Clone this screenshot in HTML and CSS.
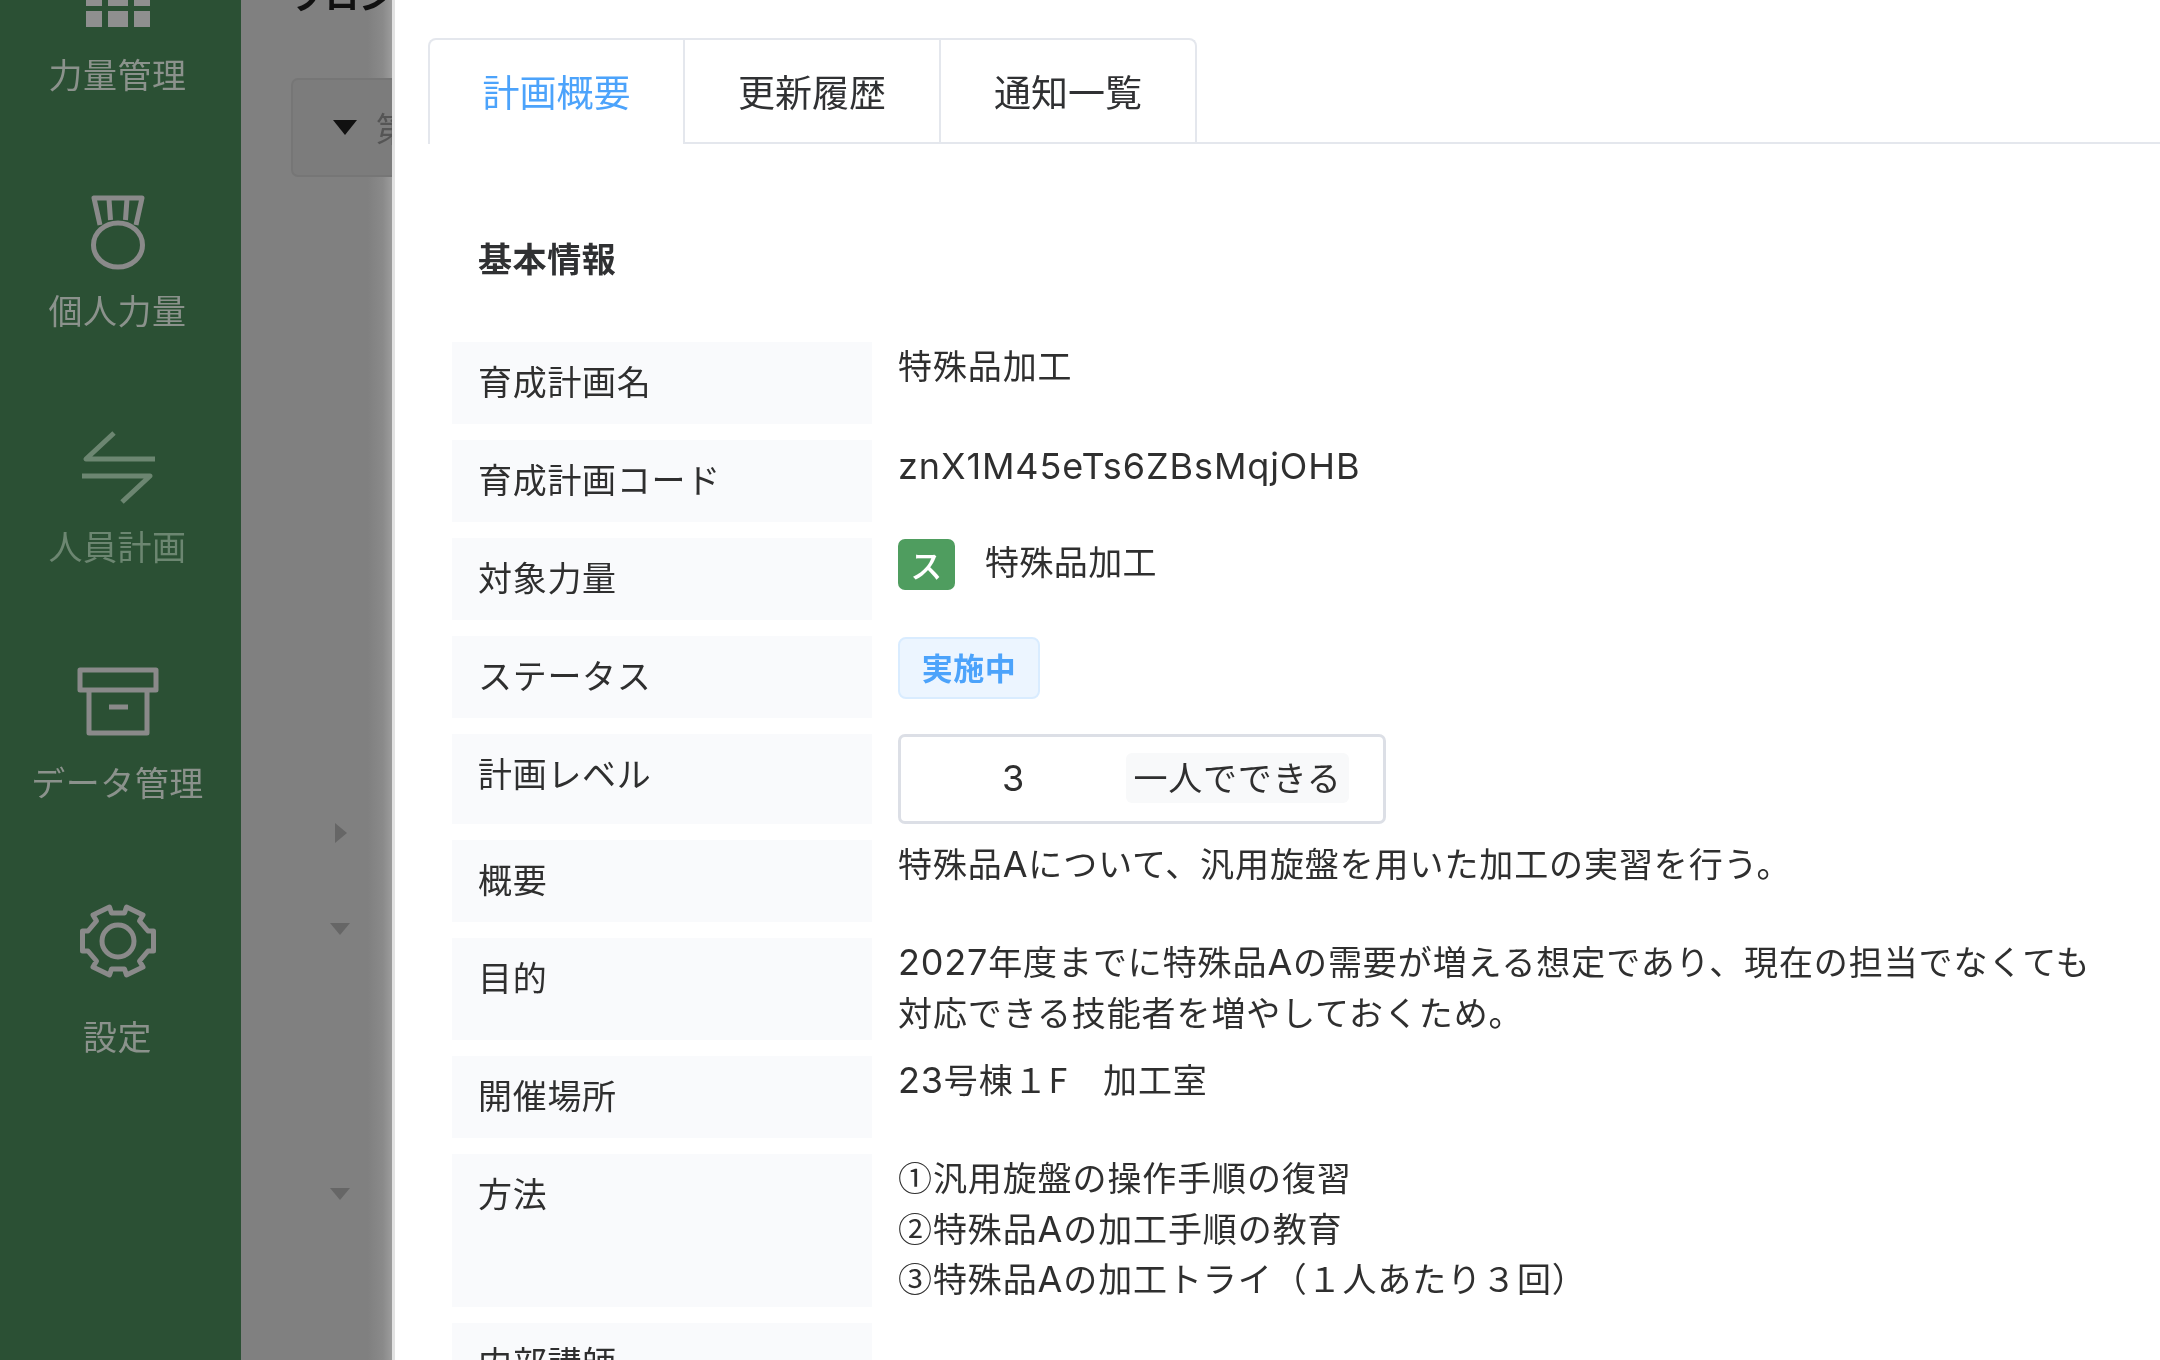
FILE: index.html
```html
<!DOCTYPE html>
<html lang="ja">
<head>
<meta charset="utf-8">
<title>計画概要</title>
<link rel="stylesheet" href="styles.css">
</head>
<body>
<div class="app">
  <nav class="sidebar">
    <div class="nav-item">
      <svg class="nav-icon" viewBox="0 0 100 80" aria-hidden="true"><path class="fill" d="M18 13h16v16H18zM40 13h20v16H40zM66 13h16v16H66zM18 34h16v16H18zM40 34h20v16H40zM66 34h16v16H66zM18 55h16v16H18zM40 55h20v16H40zM66 55h16v16H66z"/></svg>
      <span class="nav-label">力量管理</span>
    </div>
    <div class="nav-item">
      <svg class="nav-icon" viewBox="0 0 100 80" aria-hidden="true"><path class="line" d="M32 33 26 6H74L68 33M41 7l1.500 21M59 7l-1.500 21"/><ellipse class="line" cx="50" cy="53" rx="24.500" ry="22"/></svg>
      <span class="nav-label">個人力量</span>
    </div>
    <div class="nav-item nav-item-dim">
      <svg class="nav-icon" viewBox="0 0 100 80" aria-hidden="true"><path class="line" d="M46 5 18 31H87M14 48H82L54 74"/></svg>
      <span class="nav-label">人員計画</span>
    </div>
    <div class="nav-item">
      <svg class="nav-icon" viewBox="0 0 100 80" aria-hidden="true"><path class="line" d="M12 6H88V26H12ZM21 26V69H79V26M41 43H60"/></svg>
      <span class="nav-label">データ管理</span>
    </div>
    <div class="nav-item nav-item-gear">
      <svg class="nav-icon" viewBox="0 0 100 80" aria-hidden="true"><path class="line" d="M43.500 11 41.500 5 25 13 28.500 19 20 29H14.500V49H20L28.500 59 25 65 41.500 73 43.500 67H56.500L58.500 73 75 65 71.500 59 80 49H85.500V29H80L71.500 19 75 13 58.500 5 56.500 11Z"/><circle class="line" cx="50" cy="39" r="16"/></svg>
      <span class="nav-label">設定</span>
    </div>
  </nav>

  <div class="backdrop">
    <div class="page-title">プロジ</div>
    <div class="filter-box"><span class="caret"></span><span class="filter-text">第</span></div>
    <div class="tree">
      <span class="tree-arrow tree-arrow-right"></span>
      <span class="tree-arrow tree-arrow-down tree-second"></span>
      <span class="tree-arrow tree-arrow-down tree-third"></span>
    </div>
  </div>

  <main class="drawer">
    <div class="tabs">
      <div class="tab tab-active">計画概要</div>
      <div class="tab">更新履歴</div>
      <div class="tab">通知一覧</div>
    </div>
    <h2 class="section-title">基本情報</h2>
    <div class="rows">
      <div class="row"><div class="label">育成計画名</div><div class="value">特殊品加工</div></div>
      <div class="row"><div class="label">育成計画コード</div><div class="value code">znX1M45eTs6ZBsMqjOHB</div></div>
      <div class="row"><div class="label">対象力量</div><div class="value skill"><span class="skill-badge">ス</span><span>特殊品加工</span></div></div>
      <div class="row"><div class="label">ステータス</div><div class="value"><span class="status-tag">実施中</span></div></div>
      <div class="row row-level"><div class="label">計画レベル</div><div class="value"><div class="level-box"><span class="level-num">3</span><span class="level-text">一人でできる</span></div></div></div>
      <div class="row"><div class="label">概要</div><div class="value">特殊品<span class="lat">A</span>について、汎用旋盤を用いた加工の実習を行う。</div></div>
      <div class="row"><div class="label">目的</div><div class="value"><span class="lat">2027</span>年度までに特殊品<span class="lat">A</span>の需要が増える想定であり、現在の担当でなくても対応できる技能者を増やしておくため。</div></div>
      <div class="row"><div class="label">開催場所</div><div class="value"><span class="lat">23</span>号棟１F　加工室</div></div>
      <div class="row"><div class="label">方法</div><div class="value">①汎用旋盤の操作手順の復習<br>②特殊品<span class="lat">A</span>の加工手順の教育<br>③特殊品<span class="lat">A</span>の加工トライ（１人あたり３回）</div></div>
      <div class="row"><div class="label">内部講師</div><div class="value"></div></div>
    </div>
  </main>
</div>
</body>
</html>
```
FILE: styles.css
```css
* { box-sizing: border-box; }
html, body { margin: 0; height: 100%; overflow: hidden; background: #fff; }
body {
  font-family: "Noto Sans CJK JP", "Noto Sans", sans-serif;
  font-size: 34px;
  color: #2f2f2f;
}
.app { display: flex; height: 1360px; width: 2160px; overflow: hidden; filter: blur(0.7px); }

.sidebar {
  flex: 0 0 241px;
  background: #2b5034;
  padding-right: 6px;
  display: flex;
  flex-direction: column;
  gap: 94px;
  overflow: hidden;
}
.nav-item { display: flex; flex-direction: column; align-items: center; color: #8b928c; flex: none; }
.nav-item:first-child { margin-top: -44px; }
.nav-icon { width: 100px; height: 80px; margin-bottom: 16px; display: block; }
.nav-label { font-size: 34px; line-height: 44px; letter-spacing: 0.5px; white-space: nowrap; height: 46px; }
.nav-item-dim { color: #6c8671; }
.nav-item-gear { margin-top: 2px; }
.nav-item-gear .nav-icon { margin-bottom: 32px; }
.fill { fill: #8f8f8f; }
.line { fill: none; stroke: #8a8a8a; stroke-width: 5; stroke-linejoin: round; }
.nav-item-dim .line { stroke: #6c8671; }

.backdrop {
  flex: 0 0 151px;
  background: linear-gradient(90deg, #808080 0, #808080 84%, #8a8a8a 94%, #9c9c9c 100%);
  position: relative;
  overflow: hidden;
  padding: 0 0 0 50px;
}
.page-title {
  margin-top: -26px;
  height: 41px;
  font-size: 34px;
  line-height: 41px;
  font-weight: 700;
  color: #111;
  white-space: nowrap;
}
.filter-box {
  width: 200px;
  height: 99px;
  margin-top: 63px;
  border: 2px solid #767676;
  border-radius: 7px;
  display: flex;
  align-items: center;
  gap: 19px;
  padding-left: 40px;
  background: #7c7c7c;
}
.caret { width: 0; height: 0; border-left: 12px solid transparent; border-right: 12px solid transparent; border-top: 15px solid #111; }
.filter-text { color: #555; font-size: 34px; }
.tree { position: relative; }
.tree-arrow { position: absolute; width: 0; height: 0; }
.tree-arrow-right { left: 44px; top: 646px; border-top: 10px solid transparent; border-bottom: 10px solid transparent; border-left: 12px solid #666; }
.tree-arrow-down { left: 39px; border-left: 10px solid transparent; border-right: 10px solid transparent; border-top: 12px solid #666; }
.tree-second { top: 746px; }
.tree-third { top: 1011px; }

.drawer {
  flex: 1;
  min-width: 0;
  background: #fff;
  border-left: 3px solid #e2e2e2;
  padding: 38px 0 0 33px;
}
.tabs {
  display: flex;
  border-bottom: 2px solid #e4e7ed;
  height: 106px;
}
.tab {
  width: 256px;
  height: 104px;
  border: 2px solid #e4e7ed;
  border-left-width: 0;
  border-bottom: 0;
  font-size: 37px;
  line-height: 102px;
  text-align: center;
  color: #303133;
}
.tab:first-child { width: 257px; border-left-width: 2px; border-top-left-radius: 8px; }
.tab:last-child { border-top-right-radius: 8px; }
.tab-active { color: #4ca3fb; height: 106px; background: #fff; }

.section-title { margin: 89px 0 0 50px; font-size: 34px; line-height: 50px; font-weight: 700; letter-spacing: 0.6px; color: #303133; }
.rows { margin: 59px 50px 0 24px; display: flex; flex-direction: column; gap: 16px; }
.row { display: flex; gap: 26px; min-height: 82px; }
.label {
  flex: 0 0 420px;
  background: #f9fafc;
  padding: 14px 26px 18px;
  font-size: 34px;
  line-height: 50px;
  letter-spacing: 0.7px;
}
.value { flex: 1; min-width: 0; margin-top: -2px; padding-bottom: 3px; font-size: 34px; line-height: 50.600px; letter-spacing: 0.9px; color: #2f2f2f; }
.lat { font-family: Inter, "Noto Sans", sans-serif; font-size: 36px; line-height: 1; letter-spacing: 0.800px; }
.code { font-family: Inter, "Noto Sans", sans-serif; font-size: 36px; letter-spacing: 0.900px; padding-top: 3px; }
.skill { display: flex; gap: 30px; align-items: flex-start; line-height: 50px; letter-spacing: 0.4px; }
.skill-badge {
  width: 57px;
  height: 51px;
  margin-top: 3px;
  background: #4f9d5f;
  border-radius: 7px;
  color: #fff;
  text-align: center;
  font-size: 32px;
  font-weight: 500;
  line-height: 50px;
}
.status-tag {
  display: inline-block;
  width: 142px;
  height: 62px;
  margin-top: 3px;
  background: #ecf5ff;
  border: 2px solid #d9ecff;
  border-radius: 8px;
  color: #4ca3fb;
  font-size: 31px;
  font-weight: 700;
  line-height: 56px;
  letter-spacing: 0.5px;
  text-align: center;
  vertical-align: top;
}
.level-box {
  width: 488px;
  height: 90px;
  margin: 2px 0 -3px;
  padding-bottom: 2px;
  border: 3px solid #dcdfe6;
  border-radius: 7px;
  display: flex;
  align-items: center;
}
.level-num { flex: 0 0 225px; text-align: center; font-family: Inter, "Noto Sans", sans-serif; font-size: 36px; }
.level-text {
  width: 223px;
  height: 50px;
  background: #f8f9fa;
  border-radius: 6px;
  line-height: 48px;
  text-align: center;
  white-space: nowrap;
  letter-spacing: 0.8px;
}
```
